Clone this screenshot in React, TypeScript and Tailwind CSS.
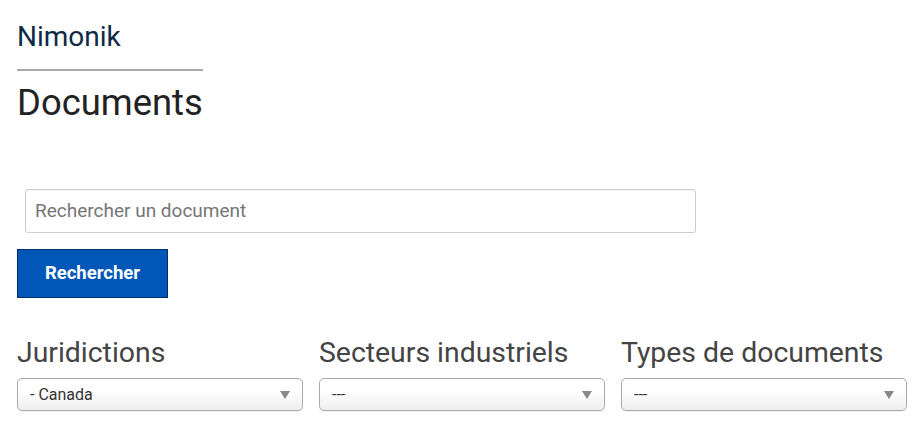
import React from "react";

function Select({ value }: { value: string }) {
  return (
    <div className="relative flex h-[33px] w-[286px] items-center rounded-[5px] border border-[#aaaaaa] bg-gradient-to-b from-white from-40% to-[#eeeeee] pl-[12px] text-[16px] text-[#333333] shadow-[0_1px_0_rgba(0,0,0,0.05)]">
      <span>{value}</span>
      <svg className="absolute right-[12px] top-[12px]" width="10" height="8" viewBox="0 0 10 8">
        <path d="M0 0 L10 0 L5 8 Z" fill="#888888" />
      </svg>
    </div>
  );
}

export default function App() {
  return (
    <div className="min-h-[433px] w-[919px] bg-white font-['Roboto','Liberation_Sans',sans-serif]">
      <div className="px-[17px] pt-[20px]">
        <div className="w-[186px] border-b-2 border-[#aaaaaa] pb-[15px]">
          <div className="text-[28px] leading-[34px] text-[#0e2a47]">Nimonik</div>
        </div>
        <h1 className="mt-[11px] text-[36.4px] leading-[42px] text-[#222222]">Documents</h1>
      </div>
      <div className="mt-[65px] pl-[25px]">
        <div className="flex h-[44px] w-[671px] items-center rounded-[3px] border border-[#cccccc] px-[9px] text-[19px] text-[#767676] shadow-[inset_0_1px_1px_rgba(0,0,0,0.05)]">
          Rechercher un document
        </div>
      </div>
      <div className="mt-[16px] pl-[17px]">
        <button className="flex h-[49px] w-[151px] items-center justify-center border border-[#002f66] bg-[#0057b8] text-[18.5px] font-bold text-white">
          Rechercher
        </button>
      </div>
      <div className="mt-[38px] flex gap-[16px] pl-[17px]">
        {[
          ["Juridictions", "- Canada"],
          ["Secteurs industriels", "---"],
          ["Types de documents", "---"],
        ].map(([label, value]) => (
          <div key={label} className="flex w-[286px] flex-col">
            <div className="text-[28.4px] leading-[34px] text-[#444444]">{label}</div>
            <div className="mt-[8px]">
              <Select value={value} />
            </div>
          </div>
        ))}
      </div>
    </div>
  );
}
